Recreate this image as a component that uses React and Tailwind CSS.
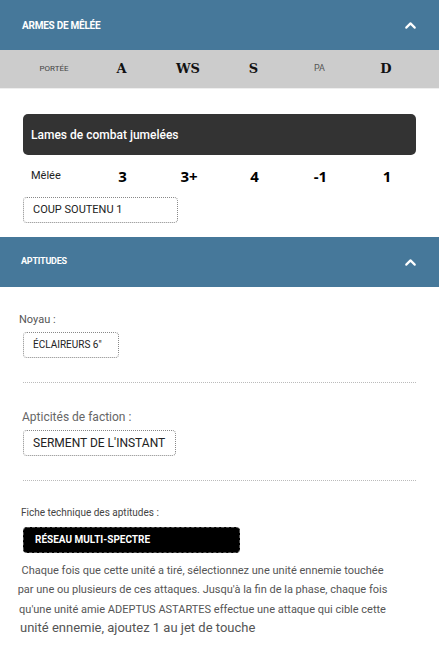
import { ChevronUp } from 'lucide-react';

const sans = { fontFamily: 'Roboto, "Liberation Sans", sans-serif' };

function SectionHeader({ title, small }) {
  return (
    <div className="h-[50px] bg-[#46789a] flex items-center justify-between pl-[22px] pr-[20px]">
      <span className={`text-white font-bold ${small ? 'text-[9px] -ml-[1px]' : 'text-[10px]'} tracking-tight`}>{title}</span>
      <ChevronUp className="text-white" size={17} strokeWidth={3} />
    </div>
  );
}

function Tag({ children, className = '' }) {
  return (
    <div className={`h-[26px] border border-dotted border-[#888] rounded-[4px] flex items-center pl-[9px] text-[#222] ${className}`}>
      {children}
    </div>
  );
}

export default function App() {
  const cols = ['A', 'WS', 'S', 'PA', 'D'];
  const values = ['3', '3+', '4', '-1', '1'];

  return (
    <div className="w-[439px] h-[658px] bg-white overflow-hidden" style={sans}>
      <SectionHeader title="ARMES DE MÊLÉE" />

      {/* profil */}
      <div className="h-[39px] bg-[#cccccc] border-b border-[#eeeeee] grid grid-cols-[88px_67px_66px_65px_67px_66px] items-center">
        <span className="text-[8px] text-[#444] text-center pl-[20px]">PORTÉE</span>
        {cols.map((c) =>
          c === 'PA' ? (
            <span key={c} className="text-[9px] text-[#555] text-center">PA</span>
          ) : (
            <span key={c} className="text-[13px] font-bold text-[#111] text-center" style={{ fontFamily: '"DejaVu Serif", serif' }}>{c}</span>
          )
        )}
      </div>

      <div className="px-[23px] pt-[25px] pb-[14px]">
        <div className="h-[41px] bg-[#333333] rounded-[5px] flex items-center pl-[8px] text-white text-[12px] font-medium">
          Lames de combat jumelées
        </div>
        <div className="h-[42px] grid grid-cols-[58px_67px_66px_65px_67px_66px] items-center pl-[8px]">
          <span className="text-[11px] text-[#222]">Mêlée</span>
          {values.map((v, i) => (
            <span key={i} className="text-[15px] font-bold text-black text-center" style={{ fontFamily: '"Open Sans", sans-serif' }}>{v}</span>
          ))}
        </div>
        <Tag className="w-[155px] text-[11px]">COUP SOUTENU 1</Tag>
      </div>

      <SectionHeader title="APTITUDES" small />

      <div className="px-[23px] pt-[25px]">
        <div className="text-[11px] text-[#555] -ml-[4px]">Noyau :</div>
        <Tag className="w-[96px] text-[10px] mt-[3px]">ÉCLAIREURS 6"</Tag>
        <div className="border-t border-dotted border-[#bbb] mt-[24px]"></div>

        <div className="text-[12px] text-[#666] mt-[25px] -ml-[1px]">Apticités de faction :</div>
        <Tag className="w-[153px] text-[12px] mt-[4px]">SERMENT DE L'INSTANT</Tag>
        <div className="border-t border-dotted border-[#bbb] mt-[24px]"></div>

        <div className="text-[10px] text-[#444] mt-[24px] -ml-[2px]">Fiche technique des aptitudes :</div>
        <div className="w-[217px] h-[26px] bg-black border border-dashed border-[#555] rounded-[4px] flex items-center pl-[11px] text-white text-[10px] font-bold mt-[7px]">
          RÉSEAU MULTI-SPECTRE
        </div>

        <div className="mt-[8px] -ml-[8px] w-[375px] text-[11px] text-[#555] leading-[19.5px] text-center">
          <div>Chaque fois que cette unité a tiré, sélectionnez une unité ennemie touchée</div>
          <div>par une ou plusieurs de ces attaques. Jusqu'à la fin de la phase, chaque fois</div>
          <div>qu'une unité amie ADEPTUS ASTARTES effectue une attaque qui cible cette</div>
        </div>
        <div className="-ml-[3px] text-[13px] text-[#555] leading-[18px]">unité ennemie, ajoutez 1 au jet de touche</div>
      </div>
    </div>
  );
}
